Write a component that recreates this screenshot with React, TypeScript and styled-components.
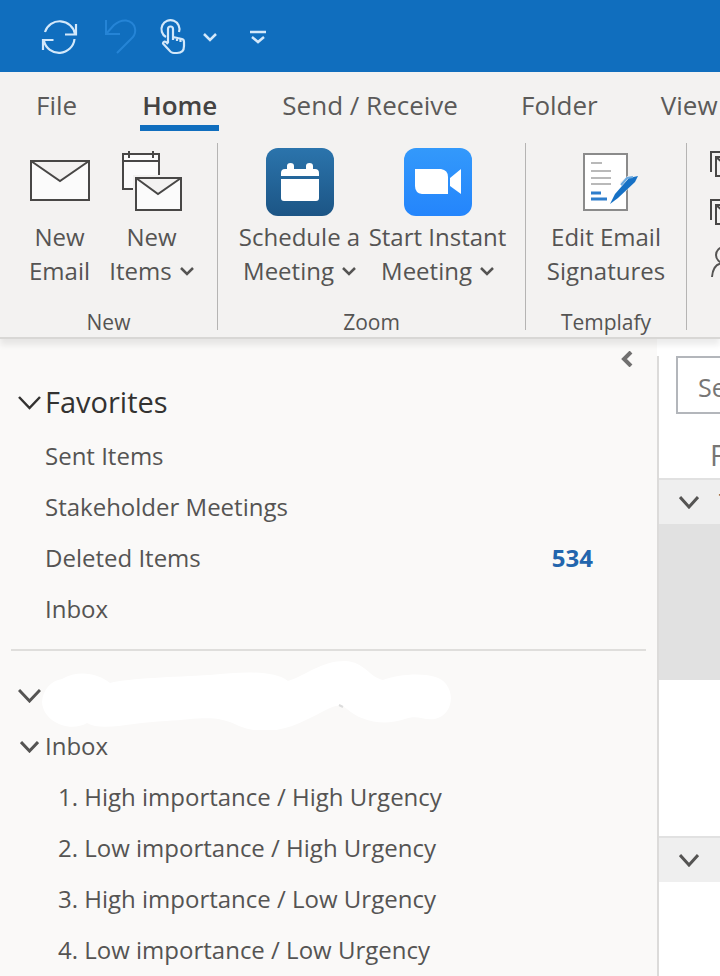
import React from "react";
import styled, { createGlobalStyle } from "styled-components";

const GlobalStyle = createGlobalStyle`
  * { box-sizing: border-box; }
  body { margin: 0; background: #ffffff; }
  body, button, input { font-family: "Open Sans", "Noto Sans", sans-serif; }
  button { border: 0; padding: 0; margin: 0; background: transparent; color: inherit; font-size: inherit; line-height: inherit; }
  svg { display: block; flex: none; }
`;

const Window = styled.div`
  display: flex;
  flex-direction: column;
  min-height: 100vh;
  overflow: hidden;
  color: #555453;
  font-size: 24px;
  line-height: 34px;
`;

const TitleBar = styled.header`
  display: flex;
  align-items: center;
  height: 72px;
  padding: 2px 40px 0;
  background: #106ebe;
  color: #d3e8fa;
`;

const QuickButton = styled.button<{ $width: number; $dim?: boolean }>`
  display: flex;
  justify-content: center;
  align-items: center;
  width: ${(p) => p.$width}px;
  height: 40px;
  color: ${(p) => (p.$dim ? "#2584d6" : "inherit")};
`;

const QuickGroup = styled.div<{ $before: number }>`
  display: flex;
  align-items: center;
  margin-left: ${(p) => p.$before}px;
`;

const Tabs = styled.nav`
  display: flex;
  gap: 63px;
  height: 68px;
  padding: 16px 0 0 36px;
  background: #f3f2f1;
  white-space: nowrap;
`;

const Tab = styled.button<{ $active?: boolean }>`
  flex: none;
  height: 43px;
  padding: 0 ${(p) => (p.$active ? 2 : 0)}px 4px;
  border-bottom: 6px solid ${(p) => (p.$active ? "#106ebe" : "transparent")};
  color: ${(p) => (p.$active ? "#444342" : "#5b5a59")};
  font-size: 26px;
  font-weight: ${(p) => (p.$active ? 600 : 400)};
`;

const Ribbon = styled.section`
  position: relative;
  display: flex;
  height: 199px;
  padding-top: 3px;
  background: #f3f2f1;
  border-bottom: 2px solid #d8d7d5;
  box-shadow: 0 6px 6px rgba(0, 0, 0, 0.08);
`;

const Group = styled.div<{ $width: number }>`
  display: flex;
  flex: 0 0 ${(p) => p.$width}px;
  flex-direction: column;
  justify-content: space-between;
  height: 187px;
  border-right: 1px solid #b5b4b3;
`;

const Commands = styled.div<{ $centered?: boolean }>`
  display: flex;
  justify-content: center;
  padding: 4px ${(p) => (p.$centered ? 0 : 6)}px 0 0;
`;

const Command = styled.button<{ $width: number }>`
  display: flex;
  flex: none;
  flex-direction: column;
  align-items: center;
  width: ${(p) => p.$width}px;
  white-space: nowrap;
`;

const CommandIcon = styled.span`
  display: flex;
  align-items: center;
  justify-content: center;
  height: 69px;
  margin-bottom: 4px;
`;

const CommandLine = styled.span`
  display: flex;
  align-items: center;
  gap: 8px;
`;

const GroupName = styled.span`
  height: 20px;
  font-size: 21px;
  line-height: 24px;
  text-align: center;
`;

const Extras = styled.div`
  display: flex;
  flex: 1 0 0;
  flex-direction: column;
  gap: 18px;
  min-width: 0;
  overflow: hidden;
  padding: 7px 0 0 23px;
`;

const Workspace = styled.main`
  display: grid;
  flex: 1;
  grid-template-columns: minmax(0, 1fr) 63px;
`;

const Folders = styled.aside`
  display: flex;
  flex-direction: column;
  background: #faf9f8;
`;

const CollapseRow = styled.div`
  display: flex;
  justify-content: flex-end;
  height: 39px;
  padding: 11px 21px 0 0;
  color: #717070;
`;

const CollapseButton = styled.button`
  width: 16px;
  height: 18px;
`;

const FolderHeading = styled.button<{ $large?: boolean }>`
  display: flex;
  align-items: center;
  gap: 4px;
  height: 51px;
  padding: 0 0 ${(p) => (p.$large ? 4 : 2)}px 18px;
  text-align: left;
  color: ${(p) => (p.$large ? "#333231" : "inherit")};
  font-size: ${(p) => (p.$large ? 29 : 24)}px;
`;

const ChevronSlot = styled.span`
  display: flex;
  justify-content: center;
  width: 23px;
  padding-top: 3px;
`;

const FolderList = styled.ul`
  margin: 0;
  padding: 0;
  list-style: none;
`;

const FavoriteRows = styled(FolderList)`
  margin-top: 2px;
`;

const FolderRow = styled.button<{ $indent: number }>`
  display: flex;
  align-items: center;
  justify-content: space-between;
  width: 100%;
  height: 51px;
  padding: 0 64px 2px ${(p) => p.$indent}px;
  white-space: nowrap;
`;

const Unread = styled.span`
  color: #2265ad;
  font-weight: 700;
`;

const Divider = styled.hr`
  width: calc(100% - 22px);
  height: 2px;
  margin: 14px 0 19px 11px;
  border: 0;
  background: #dfdedc;
`;

const MarkSlot = styled.span`
  display: flex;
  align-items: center;
  height: 51px;
  margin-left: -3px;
`;

const Messages = styled.section`
  min-width: 0;
  margin-top: 17px;
  overflow: hidden;
  border-left: 2px solid #dcdbda;
  background: #ffffff;
  white-space: nowrap;
`;

const SearchBox = styled.input`
  display: block;
  width: 320px;
  height: 58px;
  margin-left: 17px;
  padding: 4px 20px 0;
  border: 2px solid #b3b6bb;
  border-radius: 0;
  background: #ffffff;
  font-size: 25px;
  &::placeholder { color: #777675; opacity: 1; }
`;

const Filter = styled.div`
  height: 64px;
  padding: 24px 0 0 51px;
  color: #777675;
  font-size: 29px;
`;

const DayHeader = styled.button`
  display: flex;
  align-items: center;
  gap: 20px;
  width: 100%;
  height: 46px;
  padding-left: 20px;
  border-top: 2px solid #e1e1e1;
  background: #efefef;
`;

const Message = styled.div<{ $selected?: boolean }>`
  height: 156px;
  background: ${(p) => (p.$selected ? "#e1e1e1" : "#ffffff")};
`;

const Chevron = ({ w = 14, h = 9, s = 2.5 }: { w?: number; h?: number; s?: number }) => (
  <svg width={w} height={h} viewBox={`0 0 ${w} ${h}`} fill="none" stroke="currentColor" strokeWidth={s} aria-hidden="true">
    <path d={`M1 1 L${w / 2} ${h - 2} L${w - 1} 1`} />
  </svg>
);

const SyncIcon = () => (
  <svg width="38" height="36" viewBox="40 20 38 36" fill="none" stroke="currentColor" strokeWidth="2.200">
    <path d="M45 33A15.500 15.500 0 0 1 75 35M76 25V35.500H65M43 51V41H53.500M44 42A15.500 15.500 0 0 0 74.500 40" />
  </svg>
);

const UndoIcon = () => (
  <svg width="34" height="36" viewBox="103 20 34 36" fill="none" stroke="currentColor" strokeWidth="2">
    <path d="M106 21V35H120M106 35L114 26Q120 21 126 21.500C136 23 138 34 131 40L117 54" />
  </svg>
);

const TouchIcon = () => (
  <svg width="30" height="38" viewBox="158 18 30 38" fill="none" stroke="currentColor" strokeWidth="2.200" strokeLinejoin="round">
    <path d="M166 37A9 9 0 1 1 179 32" />
    <path d="M168 43V29Q168 26.500 170.500 26.500T173 29V37L182 39Q184 39.500 184 42V46Q184 53 177 53H174Q171 53 169 50L163 43.500Q163 41 166 42L168 44M173 36V40M177 37V41M180.500 38V42" />
  </svg>
);

const CustomizeIcon = () => (
  <svg width="16" height="14" viewBox="0 0 16 14" fill="none" stroke="currentColor" strokeWidth="2.500">
    <path d="M0 2H16M2 7L8 12L14 7" />
  </svg>
);

const EnvelopeIcon = () => (
  <svg width="60" height="70" viewBox="0 0 60 70" fill="#fbfbfb" stroke="#484746" strokeWidth="2">
    <path d="M1 14H59V53H1ZM1 14L30 34L59 14" />
  </svg>
);

const NewItemsIcon = () => (
  <svg width="62" height="70" viewBox="0 0 62 70" fill="#fbfbfb" stroke="#484746" strokeWidth="2">
    <path d="M12 42H2V7H38V28" />
    <path d="M2 14H38M8 4V11M32 4V11" fill="none" />
    <path d="M12 28H60V63H12Z" fill="#f3f2f1" stroke="none" />
    <path d="M15 31H60V63H15ZM15 31L37 47L60 31" />
  </svg>
);

const ScheduleIcon = () => (
  <svg width="68" height="68" viewBox="0 0 68 68">
    <defs><linearGradient id="navy" x2="0" y2="1"><stop stopColor="#2b74ac" /><stop offset="1" stopColor="#1c5585" /></linearGradient></defs>
    <rect width="68" height="68" rx="12" fill="url(#navy)" />
    <path fill="#fff" d="M15 28V25Q15 21 19 21H21V18Q21 15 24.500 15T28 18V21H40V18Q40 15 43.500 15T47 18V21H49Q53 21 53 25V28ZM15 31H53V50Q53 53 50 53H18Q15 53 15 50Z" />
  </svg>
);

const CameraIcon = () => (
  <svg width="68" height="68" viewBox="0 0 68 68">
    <defs><linearGradient id="sky" x2="0" y2="1"><stop stopColor="#3399fb" /><stop offset="1" stopColor="#2485fc" /></linearGradient></defs>
    <rect width="68" height="68" rx="12" fill="url(#sky)" />
    <path fill="#fff" d="M11 21H37Q44 22 44 29V46H18Q11 45 11 38ZM46 30L57 21V46L46 38Z" />
  </svg>
);

const SignatureIcon = () => (
  <svg width="64" height="70" viewBox="-8 0 64 70" fill="none">
    <path d="M2 7H45V63H2Z" fill="#fff" stroke="#8b8b8b" strokeWidth="2" />
    <path d="M9 16H20M9 24H29M9 31H29M9 37H29" stroke="#b9b9b9" strokeWidth="2" />
    <path d="M9 46H19M9 52H25" stroke="#2d7dcc" strokeWidth="3" />
    <path d="M43 46L50 36L47 28L38 35Z" fill="#f3f2f1" />
    <path d="M28 57L33 47L47 31L56 29L53 35L36 51Z" fill="#1671c5" />
    <path d="M39 38L45 31L51 30" stroke="#6ba9df" strokeWidth="2" />
  </svg>
);

const StackedMailIcon = () => (
  <svg width="34" height="30" viewBox="0 0 34 30" fill="none" stroke="#484746" strokeWidth="2">
    <path d="M1 22V2H25M6 7H30V26H6ZM6 7L18 17L30 7" />
  </svg>
);

const PersonIcon = () => (
  <svg width="34" height="34" viewBox="0 0 34 34" fill="none" stroke="#555453" strokeWidth="2">
    <circle cx="14" cy="9" r="8" />
    <path d="M2 31Q3 17 14 17T26 31" />
  </svg>
);

const RedactionMark = () => (
  <svg width="410" height="70" viewBox="42 660 410 70" aria-hidden="true">
    <path fill="#fff" d="M42 702C43 689 51 681 62 679C79 669 99 674 110 683C130 678 174 677 210 675C246 671 275 671 288 681C307 675 321 661 345 661C365 662 369 677 383 680C401 673 438 671 446 684C456 697 450 716 435 719C423 721 418 714 405 719C382 727 359 720 347 709C337 700 326 711 308 719C285 731 262 735 239 726C216 714 199 719 166 721C135 722 102 732 87 723C70 733 43 722 42 702Z" />
    <path d="M339 705L343 707" stroke="#dcdcdc" strokeWidth="2" />
  </svg>
);

const favorites: { name: string; unread?: number }[] = [
  { name: "Sent Items" },
  { name: "Stakeholder Meetings" },
  { name: "Deleted Items", unread: 534 },
  { name: "Inbox" },
];

const inboxFolders = [
  "1. High importance / High Urgency",
  "2. Low importance / High Urgency",
  "3. High importance / Low Urgency",
  "4. Low importance / Low Urgency",
];

export default function App() {
  return (
    <Window>
      <GlobalStyle />
      <TitleBar>
        <QuickButton $width={38} aria-label="Send and receive all"><SyncIcon /></QuickButton>
        <QuickGroup $before={25}>
          <QuickButton $width={34} $dim aria-label="Undo"><UndoIcon /></QuickButton>
        </QuickGroup>
        <QuickGroup $before={21}>
          <QuickButton $width={30} aria-label="Touch mode"><TouchIcon /></QuickButton>
          <QuickButton $width={44} aria-label="Touch mode options"><Chevron /></QuickButton>
        </QuickGroup>
        <QuickGroup $before={14}>
          <QuickButton $width={24} aria-label="Customize toolbar"><CustomizeIcon /></QuickButton>
        </QuickGroup>
      </TitleBar>
      <Tabs>
        <Tab>File</Tab>
        <Tab $active>Home</Tab>
        <Tab>Send / Receive</Tab>
        <Tab>Folder</Tab>
        <Tab>View</Tab>
      </Tabs>
      <Ribbon>
        <Group $width={218}>
          <Commands>
            <Command $width={92}>
              <CommandIcon><EnvelopeIcon /></CommandIcon>
              <CommandLine>New</CommandLine>
              <CommandLine>Email</CommandLine>
            </Command>
            <Command $width={92}>
              <CommandIcon><NewItemsIcon /></CommandIcon>
              <CommandLine>New</CommandLine>
              <CommandLine>Items <Chevron /></CommandLine>
            </Command>
          </Commands>
          <GroupName>New</GroupName>
        </Group>
        <Group $width={308}>
          <Commands>
            <Command $width={138}>
              <CommandIcon><ScheduleIcon /></CommandIcon>
              <CommandLine>Schedule a</CommandLine>
              <CommandLine>Meeting <Chevron /></CommandLine>
            </Command>
            <Command $width={138}>
              <CommandIcon><CameraIcon /></CommandIcon>
              <CommandLine>Start Instant</CommandLine>
              <CommandLine>Meeting <Chevron /></CommandLine>
            </Command>
          </Commands>
          <GroupName>Zoom</GroupName>
        </Group>
        <Group $width={161}>
          <Commands $centered>
            <Command $width={138}>
              <CommandIcon><SignatureIcon /></CommandIcon>
              <CommandLine>Edit Email</CommandLine>
              <CommandLine>Signatures</CommandLine>
            </Command>
          </Commands>
          <GroupName>Templafy</GroupName>
        </Group>
        <Extras>
          <StackedMailIcon />
          <StackedMailIcon />
          <PersonIcon />
        </Extras>
      </Ribbon>
      <Workspace>
        <Folders>
          <CollapseRow>
            <CollapseButton aria-label="Collapse folder pane">
              <svg width="14" height="16" viewBox="0 0 14 16" fill="none" stroke="currentColor" strokeWidth="4">
                <path d="M11 1L4 8L11 15" />
              </svg>
            </CollapseButton>
          </CollapseRow>
          <FolderHeading $large>
            <ChevronSlot><Chevron w={23} h={14} /></ChevronSlot>
            Favorites
          </FolderHeading>
          <FavoriteRows>
            {favorites.map((f) => (
              <li key={f.name}>
                <FolderRow $indent={45}>
                  {f.name}
                  {f.unread && <Unread>{f.unread}</Unread>}
                </FolderRow>
              </li>
            ))}
          </FavoriteRows>
          <Divider />
          <FolderHeading aria-label="Account">
            <ChevronSlot><Chevron w={23} h={14} s={3} /></ChevronSlot>
            <MarkSlot><RedactionMark /></MarkSlot>
          </FolderHeading>
          <FolderHeading>
            <ChevronSlot><Chevron w={19} h={12} s={3} /></ChevronSlot>
            Inbox
          </FolderHeading>
          <FolderList>
            {inboxFolders.map((name) => (
              <li key={name}><FolderRow $indent={58}>{name}</FolderRow></li>
            ))}
          </FolderList>
        </Folders>
        <Messages>
          <SearchBox aria-label="Search mail" placeholder="Search" />
          <Filter>Focused</Filter>
          <DayHeader><Chevron w={20} h={13} s={3} />Today</DayHeader>
          <Message $selected />
          <Message />
          <DayHeader aria-label="Earlier"><Chevron w={20} h={13} s={3} /></DayHeader>
        </Messages>
      </Workspace>
    </Window>
  );
}
